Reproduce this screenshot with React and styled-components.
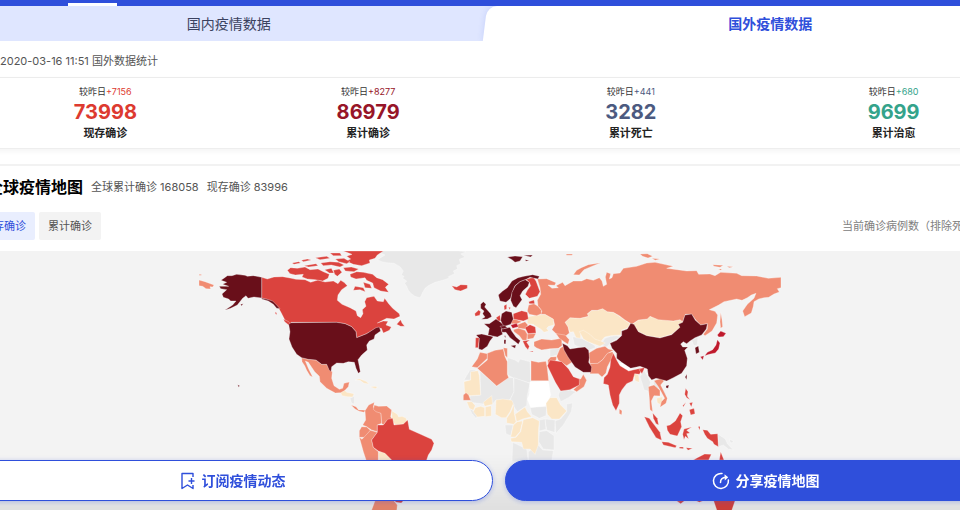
import React, { useState } from 'react'
import styled, { createGlobalStyle } from 'styled-components'

const colors = {
  blue: '#2f4fdb',
  none: '#ffffff',
  empty: '#e8e8e8',
  low: '#fbe6c6',
  mid: '#f08c72',
  high: '#db433e',
  severe: '#bf1a2c',
  worst: '#690f1a',
}

const stats = [
  { label: '现存确诊', value: '73998', diff: '+7156', color: '#dd3a30' },
  { label: '累计确诊', value: '86979', diff: '+8277', color: '#971528' },
  { label: '累计死亡', value: '3282', diff: '+441', color: '#4c5a80' },
  { label: '累计治愈', value: '9699', diff: '+680', color: '#34a38b' },
]

// Countries grouped by how many cases they have
const regions = [
  {
    level: 'empty',
    shapes: [
      // Greenland
      'M540,18L805,18 828,20 812,27 826,36 808,43 812,56 800,62 803,72 790,78 794,86 775,95 778,99 758,106 735,112 715,122 705,130 698,142 693,154 688,158 675,154 664,146 655,136 650,124 644,115 650,108 638,100 642,94 634,90 640,78 630,65 612,55 590,53 575,50 563,44 572,38 585,30 572,24z',
      'M480,460L493,453 493,477 485,475z',
      'M822,405L840,375 860,375 842,385 842,405z',
      'M870,378L920,423 955,398 970,398 972,440 960,465 918,465 905,480 840,472 840,453 872,450z',
      'M952,338L975,345 985,352 990,342 1020,350 1023,415 972,400 954,390z',
      'M972,398L1020,415 1012,450 1010,482 982,500 968,480 960,465 972,440z',
      'M1020,485L1070,485 1068,512 1048,520 1025,508z',
      'M1130,477L1148,474 1144,500 1120,540 1098,565 1095,528 1112,522 1130,500z',
      'M1065,522L1095,525 1094,562 1070,555z',
      'M1048,525L1065,522 1068,553 1048,558z',
      'M1048,560L1070,557 1092,572 1092,615 1060,612 1046,590z',
      'M945,540L970,540 962,572 948,566z',
      'M838,490L850,496 862,514 858,520 846,506z',
      'M968,592L1010,612 1015,650 966,650z',
      'M1015,620L1045,600 1058,615 1090,617 1085,650 1015,650z',
      'M1105,450L1110,438 1140,435 1158,440 1135,458 1112,470z',
      'M1080,313L1110,310 1102,330 1080,336z',
      'M1148,275L1170,278 1195,290 1215,302 1216,308 1195,316 1170,306 1153,300z',
      'M1232,298L1245,280 1262,274 1280,272 1292,276 1268,288 1250,306z',
      'M1350,395L1362,375 1372,392 1382,412 1376,432 1384,450 1374,438 1362,435 1358,420z',
      'M1390,410L1402,405 1430,448 1424,452 1406,430 1392,430z',
      'M1505,286L1524,276 1522,300 1512,302z',
      'M1583,567L1606,582 1612,596 1630,615 1615,612 1600,600 1585,605z',
      'M1618,582L1632,590 1622,594z',
    ],
  },
  {
    level: 'none',
    shapes: [
      'M1020,410L1075,407 1082,450 1072,480 1060,484 1040,486 1022,488 1012,462 1018,448z',
      'M1288,355L1297,354 1325,370 1326,380 1302,374z',
    ],
  },
  {
    level: 'low',
    shapes: [
      'M452,443L464,436 470,442 492,446 488,456 472,455 456,452z',
      'M495,405L508,401 528,409 538,417 522,415 510,406z',
      'M540,425L555,424 563,426 556,431z',
      'M605,497L622,508 626,516 636,514 648,519 652,530 640,537 617,540 606,528z',
      'M565,625L580,613 590,628 606,640 608,670 570,668z',
      // West and central Africa
      'M822,410L842,405 842,380 864,377 868,392 872,450 838,452 824,444z',
      'M830,470L846,470 856,482 850,496 838,490z',
      'M856,488L872,484 884,488 884,514 862,516 850,500z',
      'M880,472L892,462 905,452 908,478 884,484z',
      'M886,486L904,482 904,513 886,515z',
      'M918,465L938,462 966,466 970,476 960,500 948,518 934,518 916,508z',
      'M972,478L972,500 978,530 972,538 950,534 950,520 962,502z',
      'M975,508L1005,486 1012,500 1025,515 998,522 980,530z',
      'M970,540L982,530 998,528 990,560 976,576 962,576z',
      'M1000,524L1028,518 1048,528 1045,560 1045,600 1035,628 1020,612 1000,612 995,592 964,590 962,580 978,577 992,560z',
      'M1068,475L1080,458 1100,458 1112,480 1130,498 1108,522 1085,522 1072,508z',
      // Ukraine and Kazakhstan
      'M1012,215L1042,211 1065,208 1090,222 1092,240 1076,244 1070,250 1076,258 1062,262 1052,252 1038,244 1030,238 1012,236z',
      'M1125,232L1140,218 1170,220 1195,214 1192,206 1205,197 1222,196 1238,191 1252,200 1270,202 1288,214 1305,226 1320,236 1312,250 1295,255 1292,270 1262,272 1244,276 1232,290 1212,284 1195,268 1172,262 1172,280 1158,278 1150,260 1140,262 1134,246z',
      'M1168,260L1180,256 1200,268 1214,282 1232,288 1246,294 1230,304 1214,298 1194,290 1180,282z',
      'M1328,238L1345,225 1372,222 1380,214 1405,222 1450,228 1470,224 1479,232 1465,238 1472,246 1445,268 1410,278 1370,272 1345,260z',
      'M1330,383L1346,390 1348,412 1336,408z',
      'M1400,460L1418,455 1415,480 1402,474z',
    ],
  },
  {
    level: 'mid',
    shapes: [
      // Russia
      'M27,105L45,110 72,120 68,126 60,125 62,132 48,131 38,124 27,122z',
      'M27,88L34,88 34,91 27,91z',
      'M1042,102L1070,101 1098,113 1094,121 1074,120 1086,130 1105,128 1098,122 1118,112 1125,122 1150,108 1175,108 1190,101 1210,106 1228,98 1236,108 1240,124 1250,118 1246,96 1250,82 1262,86 1258,102 1266,98 1270,86 1290,84 1300,70 1340,64 1370,54 1395,52 1450,64 1430,70 1462,74 1490,78 1520,77 1526,88 1560,87 1575,92 1592,82 1640,85 1655,92 1700,93 1735,100 1773,97 1773,128 1762,131 1768,141 1752,147 1736,157 1722,158 1706,162 1692,170 1690,184 1684,204 1664,215 1658,198 1672,178 1692,160 1698,145 1684,150 1672,158 1656,166 1640,162 1602,170 1586,180 1558,194 1575,199 1583,210 1580,234 1566,258 1545,272 1540,268 1552,252 1552,236 1532,240 1518,226 1505,208 1486,208 1478,230 1470,224 1450,228 1405,224 1380,214 1372,222 1345,225 1326,238 1305,225 1288,212 1270,202 1252,200 1238,191 1222,196 1205,196 1192,206 1195,214 1170,220 1140,218 1125,232 1134,246 1138,264 1128,272 1135,288 1100,268 1086,254 1094,240 1090,222 1065,208 1052,208 1056,198 1044,182 1042,166 1052,148 1050,128z',
      'M1150,89L1160,76 1174,68 1195,59 1232,53 1210,62 1182,74 1168,90z',
      'M1350,27L1372,26 1388,34 1374,39 1358,34zM1385,40L1410,42 1396,46z',
      'M1568,59L1600,61 1590,67 1572,64zM1610,64L1630,65 1618,68zM1585,72L1596,72 1592,76z',
      'M1592,202L1596,224 1598,245 1592,250 1590,230z',
      'M1128,27L1148,27 1146,31 1130,31z',
      // Mexico and the Andes
      'M335,338L355,343 378,345 395,358 410,358 420,375 427,380 425,400 432,422 448,433 458,430 462,415 478,411 475,425 465,436 452,443 436,444 410,430 390,410 388,394 374,380 366,368 355,352 346,348 356,372 368,396 360,392 350,376 344,362 336,350z',
      'M483,480L498,485 506,495 518,495 527,496 522,502 508,499 495,492z',
      'M525,497L536,480 553,472 550,487 560,495 573,505 575,535 562,540 562,560 545,555 530,545 518,540 527,525z',
      'M553,480L565,484 590,483 605,495 602,515 608,525 590,527 580,540 575,535 573,505 558,500 550,493z',
      'M515,545L530,546 541,556 525,577 508,577 508,557z',
      'M508,577L516,583 541,556 562,562 545,585 550,607 565,620 565,650 530,650 520,620z',
      'M556,765L610,765 622,780 620,800 543,800z',
      // North Africa and the Middle East
      'M845,365L862,342 870,322 892,326 892,340 862,368z',
      'M892,325L915,316 940,312 945,335 952,350 952,388 956,398 920,423 862,370 892,345z',
      'M940,308L952,310 952,338 946,332z',
      'M820,450L828,443 836,450 842,466 820,466z',
      'M1023,347L1045,352 1068,349 1072,370 1076,407 1023,407z',
      'M1032,290L1055,282 1085,285 1115,280 1116,302 1105,310 1080,311 1055,315 1040,309 1032,303z',
      'M1098,266L1125,270 1138,284 1134,298 1122,290 1108,280z',
      'M1110,310L1122,302 1132,326 1148,350 1130,362 1105,346 1100,334z',
      'M1073,346L1082,336 1100,335 1098,346 1080,360 1074,358z',
      'M1160,400L1172,402 1180,388 1190,406 1182,425 1160,440 1150,434 1168,418z',
      'M1196,324L1220,310 1245,304 1255,312 1270,316 1252,326 1238,344 1222,356 1200,356z',
      'M1200,356L1224,355 1238,344 1252,325 1268,320 1272,334 1260,350 1252,366 1248,384 1236,396 1225,386 1200,386z',
      // Central Europe
      'M956,228L975,222 995,230 980,237 965,236z',
      'M980,240L1005,230 1014,240 1006,252 985,250z',
      'M970,254L985,250 1005,256 1012,268 1010,286 998,286 988,272 972,260z',
      'M1012,267L1038,265 1030,280 1012,283z',
      'M1016,180L1032,176 1044,184 1054,196 1054,206 1040,212 1018,208 1012,198z',
      // South Asia
      'M1288,492L1296,497 1295,509 1288,506z',
      'M1375,425L1392,420 1410,436 1410,453 1392,452 1384,468 1388,500 1380,494 1378,460z',
      'M1392,407L1415,400 1422,408 1412,420 1432,460 1428,475 1410,487 1414,470 1424,460 1405,425z',
    ],
  },
  {
    level: 'high',
    shapes: [
      // Canada
      'M215,97L232,102 252,96 278,95 300,99 318,103 345,104 362,112 384,105 405,111 430,108 444,116 452,106 462,112 472,122 455,134 444,150 442,166 456,178 480,188 498,198 502,212 512,218 519,206 517,194 528,184 524,170 530,158 552,154 562,168 580,170 584,160 596,176 608,190 628,206 630,214 612,222 590,220 562,234 580,228 594,229 588,240 604,246 598,256 580,264 574,250 558,250 530,266 500,278 498,260 485,245 465,236 440,232 303,232 303,240 285,226 274,204 264,186 248,170 230,163 215,160z',
      'M620,238L632,224 636,234 644,244 632,244z',
      'M480,88L500,80 520,82 548,88 560,98 578,104 596,118 586,127 596,142 572,138 552,128 548,114 530,106 525,98 498,102 482,96z',
      'M520,112L540,118 545,130 525,128z',
      'M495,124L520,128 526,140 510,134 490,136z',
      'M460,18L580,18 562,30 555,40 538,45 540,54 515,62 490,58 468,48 482,42 470,34 486,28z',
      'M292,76L302,68 322,70 345,66 360,74 384,72 400,80 418,88 414,100 398,108 376,104 352,102 336,96 340,88 316,90 300,86z',
      'M306,54L326,50 332,54 312,58zM334,46L352,42 364,45 340,50zM342,62L378,56 384,62 356,66z',
      'M376,38L410,34 420,40 390,44zM392,54L420,50 446,52 462,60 450,66 424,60 400,62z',
      'M404,74L424,70 432,84 418,84zM430,76L448,72 456,82 442,94 434,88zM420,24L450,24 455,32 430,32z',
      'M436,42L462,40 480,50 470,56 446,50zM460,68L484,66 506,72 492,80 466,78z',
      'M256,200L260,204 260,209 256,206zM280,222L296,230 304,240 296,240 284,230z',
      // Iceland, Ireland
      'M785,122L800,126 812,119 832,120 832,130 812,138 795,134z',
      'M854,206L866,195 872,200 869,211 856,214z',
      // Brazil and Australia
      'M562,540L580,540 593,523 608,520 612,540 640,537 653,525 658,553 690,567 725,583 732,595 725,615 715,630 710,645 696,680 665,700 630,690 605,645 585,625 565,618 550,607 545,585 562,562z',
      'M612,765L642,765 634,774 618,772z',
      'M1510,645L1522,638 1544,627 1564,628 1556,645zM1588,645L1592,620 1602,645z',
      'M1460,768L1486,766 1472,776zM1514,766L1544,766 1528,772zM1570,765L1636,765 1624,800 1582,800z',
      // Europe
      'M1008,103L1030,97 1038,108 1050,140 1042,154 1018,160 1006,148 1012,136 1022,122 1018,112z',
      'M970,206L995,197 1012,202 1015,222 1000,228 970,222z',
      'M942,182L950,178 950,192 943,195zM956,186L962,188 958,194z',
      'M918,218L930,210 932,225 926,230z',
      'M857,278L868,278 865,308 856,308z',
      'M1005,248L1020,239 1036,246 1038,264 1014,266z',
      'M998,288L1020,285 1010,292 1018,304 1014,314 1006,305zM1018,318L1030,318 1028,321z',
      'M1016,170L1032,165 1034,176 1018,176z',
      // Saudi Arabia, India
      'M1072,362L1080,345 1115,350 1136,372 1150,395 1168,402 1168,420 1140,434 1112,438 1096,412z',
      'M1270,325L1280,345 1290,362 1316,378 1332,374 1360,368 1348,388 1334,386 1328,408 1310,416 1296,434 1288,450 1288,475 1278,497 1268,480 1260,450 1255,420 1240,416 1242,398 1252,388 1260,366 1262,345z',
      // South east Asia
      'M1388,504L1402,520 1406,540 1398,536 1390,520z',
      'M1363,515L1378,520 1410,562 1415,586 1398,578 1378,546z',
      'M1415,590L1435,592 1460,602 1456,608 1420,600zM1468,606L1480,606 1480,611 1468,610zM1488,608L1508,610 1494,616z',
      'M1430,542L1440,540 1456,528 1470,504 1478,512 1472,530 1475,545 1462,573 1440,568 1432,556z',
      'M1482,552L1506,546 1490,556 1500,564 1490,566 1496,582 1486,574 1482,584 1478,568z',
      'M1524,545L1530,544 1530,556zM1538,554L1552,556 1562,568 1583,566 1585,605 1572,598 1568,590 1552,580 1544,568z',
      'M1487,430L1494,440 1492,454 1500,464 1490,458 1484,448zM1498,494L1512,490 1515,506 1502,510zM1498,474L1508,472 1504,486zM1478,482L1488,472 1480,486z',
      'M1347,374L1365,366 1356,386z',
    ],
  },
  {
    level: 'severe',
    shapes: [
      'M962,240L980,235 985,245 968,250z',
      'M1582,270L1592,258 1608,265 1600,275 1586,276z',
      'M1582,284L1590,294 1586,312 1576,324 1558,328 1544,332 1552,322 1568,314 1578,300z',
      'M1531,335L1542,332 1538,345z',
    ],
  },
  {
    level: 'worst',
    shapes: [
      // United States
      'M215,97L190,92 172,94 165,91 140,88 126,92 112,92 104,98 93,106 110,112 98,118 116,124 88,124 92,131 110,134 96,147 100,157 116,162 122,168 138,168 128,180 104,196 122,190 142,180 158,160 168,152 174,160 192,156 215,159 232,163 248,168 260,180 270,191 260,190 250,178 235,168 215,162z',
      'M152,178L160,176 154,183zM143,419L149,422 146,427z',
      'M303,233L440,232 465,236 485,245 498,260 500,278 530,266 558,248 568,246 572,258 555,270 552,282 538,288 530,300 532,315 515,330 504,344 508,364 511,380 505,385 498,370 493,352 475,350 460,355 440,354 425,365 423,380 417,374 410,358 395,358 378,345 355,343 335,338 320,328 306,306 297,282 300,260 296,238z',
      // Scandinavia, Svalbard
      'M952,36L975,33 998,35 990,48 975,52 966,44zM1000,31L1028,30 1022,36zM1005,44L1018,46 1008,49z',
      'M925,150L938,138 952,128 966,108 984,98 1002,94 1028,89 1048,94 1044,102 1020,97 1006,104 990,110 975,122 967,142 962,160 948,172 930,168z',
      'M962,166L966,142 976,122 990,110 1006,104 1018,112 1014,124 998,138 990,152 996,164 986,178 978,188 970,184z',
      // Western Europe
      'M872,178L880,170 888,178 884,186 892,195 902,206 905,215 892,222 874,223 885,216 878,206 882,198 872,190z',
      'M935,206L948,198 965,202 970,222 962,238 940,245 932,226z',
      'M882,236L898,236 918,222 932,232 940,240 934,254 938,268 922,276 894,270 898,250z',
      'M858,270L875,267 910,275 900,288 892,304 876,315 866,312 868,280z',
      'M935,252L960,247 965,258 978,276 991,287 985,298 976,290 960,278 948,262 936,262z',
      'M962,302L978,300 975,310zM942,284L948,284 947,297 942,296zM943,272L947,272 946,280z',
      'M930,244L945,242 952,248 938,252z',
      // Iran
      'M1117,295L1132,302 1140,312 1165,308 1185,306 1196,316 1198,338 1196,352 1205,366 1203,382 1180,382 1155,366 1134,336 1122,315z',
      // China, South Korea
      'M1260,295L1280,286 1295,272 1295,258 1312,252 1322,235 1332,238 1345,260 1370,272 1410,279 1445,269 1470,247 1465,238 1478,232 1485,210 1505,207 1516,226 1532,240 1552,236 1549,252 1535,270 1515,278 1500,288 1490,296 1480,290 1472,297 1478,306 1494,306 1484,316 1492,340 1490,362 1475,385 1450,398 1430,408 1408,402 1398,400 1385,405 1375,392 1372,372 1350,364 1322,370 1295,352 1280,340 1280,325 1266,310z',
      'M1428,422L1437,420 1434,430 1428,428zM1485,396L1491,388 1490,404z',
      'M1515,308L1525,303 1528,322 1518,327z',
    ],
  },
]

const BookmarkIcon = () => (
  <svg width="16" height="18" viewBox="0 0 16 18" fill="none" stroke="currentColor" strokeWidth="1.4" aria-hidden="true">
    <path d="M13 5V1.500H2v15l5.500-3.500 5.500 3.500V13" strokeLinejoin="round" />
    <path d="M11.500 6v6M8.500 9h6" />
  </svg>
)

const ShareIcon = () => (
  <svg width="18" height="18" viewBox="0 0 18 18" fill="none" stroke="currentColor" strokeWidth="1.5" aria-hidden="true">
    <path d="M10 1.500A7.500 7.500 0 1 0 16.400 8" strokeLinecap="round" />
    <path d="M8.500 10.500c0-3 2-5 5.500-5.200" strokeLinecap="round" />
    <path d="M12.500 2.300l3.700 2.900-3.400 3.200z" fill="currentColor" stroke="none" />
  </svg>
)

const WorldMap = () => (
  <MapSvg viewBox="-570 18 2880 777" role="img" aria-label="全球疫情地图">
    {regions.map(({ level, shapes }) => (
      <g key={level} fill={colors[level]}>
        {shapes.map((d) => (
          <path key={d} d={d} />
        ))}
      </g>
    ))}
  </MapSvg>
)

const App = () => {
  const [tab, setTab] = useState('abroad')
  const [mode, setMode] = useState('current')

  return (
    <>
      <GlobalStyle />
      <Page>
        <TopBar />
        <Sheet>
          <Tabs>
            <Tab $active={tab === 'home'} onClick={() => setTab('home')}>
              <span>国内疫情数据</span>
            </Tab>
            <Tab $active={tab === 'abroad'} onClick={() => setTab('abroad')}>
              <span>国外疫情数据</span>
            </Tab>
          </Tabs>

          <Updated>2020-03-16 11:51 国外数据统计</Updated>

          <StatsRow>
            {stats.map(({ label, value, diff, color }) => (
              <Stat key={label} $color={color}>
                <p className="diff">
                  较昨日<em>{diff}</em>
                </p>
                <strong>{value}</strong>
                <p className="label">{label}</p>
              </Stat>
            ))}
          </StatsRow>

          <MapSection>
            <MapHeader>
              <h2>全球疫情地图</h2>
              <p>全球累计确诊 168058</p>
              <p>现存确诊 83996</p>
            </MapHeader>
            <Filters>
              <Chip
                $active={mode === 'current'}
                onClick={() => setMode('current')}
              >
                现存确诊
              </Chip>
              <Chip $active={mode === 'total'} onClick={() => setMode('total')}>
                累计确诊
              </Chip>
              <span className="note">当前确诊病例数（排除死亡、治愈）</span>
            </Filters>
          </MapSection>
        </Sheet>

        <WorldMap />

        <ActionBar>
          <ActionButton>
            <BookmarkIcon />
            订阅疫情动态
          </ActionButton>
          <ActionButton $primary>
            <ShareIcon />
            分享疫情地图
          </ActionButton>
        </ActionBar>
      </Page>
    </>
  )
}

const GlobalStyle = createGlobalStyle`
  * {
    box-sizing: border-box;
  }

  body {
    margin: 0;
    background: #fff;
    font-family: Inter, 'Noto Sans CJK SC', sans-serif;
    color: #222;
  }

  h2,
  p {
    margin: 0;
  }

  button {
    border: 0;
    padding: 0;
    font-family: inherit;
    cursor: pointer;
  }
`

const Page = styled.main`
  overflow: hidden;
`

const TopBar = styled.header`
  display: flex;
  align-items: flex-end;
  height: 6px;
  padding-left: 68px;
  background: ${colors.blue};

  &::after {
    content: '';
    width: 49px;
    height: 3px;
    background: #fff;
  }
`

// Bleeds out of the window on both sides
const Sheet = styled.div`
  margin: 0 -81px 0 -42px;
`

const Tabs = styled.nav`
  display: flex;
  height: 35px;
  overflow: hidden;
  background: #dfe6ff;
`

const Tab = styled.button`
  position: relative;
  flex: 1;
  background: transparent;
  font-size: 14px;
  line-height: 20px;
  font-weight: ${(props) => (props.$active ? 700 : 400)};
  color: ${(props) => (props.$active ? colors.blue : '#3b4260')};

  &::before {
    content: '';
    display: ${(props) => (props.$active ? 'block' : 'none')};
    position: absolute;
    inset: 0 -16px 0 -15px;
    border-radius: 10px 10px 0 0;
    background: #fff;
    transform: skewX(-7deg);
    box-shadow: 0 0 6px rgba(47, 79, 219, 0.15);
  }

  span {
    position: relative;
  }
`

const Updated = styled.p`
  height: 37px;
  padding-left: 42px;
  border-bottom: 1px solid #eee;
  font-size: 11px;
  line-height: 40px;
  color: #555;
`

const StatsRow = styled.section`
  display: grid;
  grid-template-columns: repeat(4, 1fr);
  padding: 8px 16px;
  border-bottom: 1px solid #eee;
  box-shadow: 0 2px 6px rgba(0, 0, 0, 0.05);
`

const Stat = styled.div`
  position: relative;
  display: flex;
  flex-direction: column;
  align-items: center;

  & + &::before {
    content: '';
    position: absolute;
    left: 0;
    top: 16px;
    width: 1px;
    height: 28px;
    background: linear-gradient(#e4e4e4, #bbb, #eee);
  }

  .diff {
    font-size: 9px;
    line-height: 12px;
    color: #333;
  }

  em {
    font-style: normal;
    color: ${(props) => props.$color};
  }

  strong {
    font-size: 20px;
    line-height: 28px;
    font-weight: 700;
    color: ${(props) => props.$color};
  }

  .label {
    font-size: 11px;
    line-height: 14px;
    font-weight: 700;
    color: #222;
  }
`

const MapSection = styled.section`
  margin-top: 15px;
  padding: 8px 23px 11px 15px;
  border-top: 2px solid #f2f2f2;
`

const MapHeader = styled.div`
  display: flex;
  align-items: center;
  gap: 8px;
  height: 26px;
  padding-left: 14px;

  h2 {
    font-size: 16px;
    line-height: 24px;
    font-weight: 700;
    color: #000;
  }

  p {
    font-size: 11px;
    line-height: 20px;
    color: #555;
  }
`

const Filters = styled.div`
  display: flex;
  align-items: center;
  gap: 4px;
  margin-top: 12px;

  .note {
    margin-left: auto;
    font-size: 11px;
    line-height: 20px;
    color: #808080;
  }
`

const Chip = styled.button`
  height: 28px;
  padding: 0 9px;
  border-radius: 2px;
  font-size: 11px;
  line-height: 20px;
  color: ${(props) => (props.$active ? colors.blue : '#555')};
  background: ${(props) => (props.$active ? '#e9eefe' : '#f3f3f3')};
`

const MapSvg = styled.svg`
  display: block;
  width: 100%;
  height: auto;
  background: #f3f3f3;

  path {
    stroke: #fff;
    stroke-opacity: 0.6;
    stroke-width: 1.5;
    stroke-linejoin: round;
  }
`

const ActionBar = styled.div`
  position: fixed;
  left: -28px;
  right: -66px;
  bottom: 0;
  display: flex;
  gap: 12px;
  padding: 6px 0 9px;
  background: linear-gradient(rgba(0, 0, 0, 0), rgba(0, 0, 0, 0.08));
`

const ActionButton = styled.button`
  flex: 1;
  display: flex;
  align-items: center;
  justify-content: center;
  gap: 6px;
  height: 41px;
  border: 1px solid ${colors.blue};
  border-radius: 21px;
  font-size: 14px;
  line-height: 20px;
  font-weight: 700;
  color: ${(props) => (props.$primary ? '#fff' : colors.blue)};
  background: ${(props) => (props.$primary ? colors.blue : '#fff')};
  box-shadow: 0 1px 5px rgba(47, 79, 219, 0.3);
`

export default App
